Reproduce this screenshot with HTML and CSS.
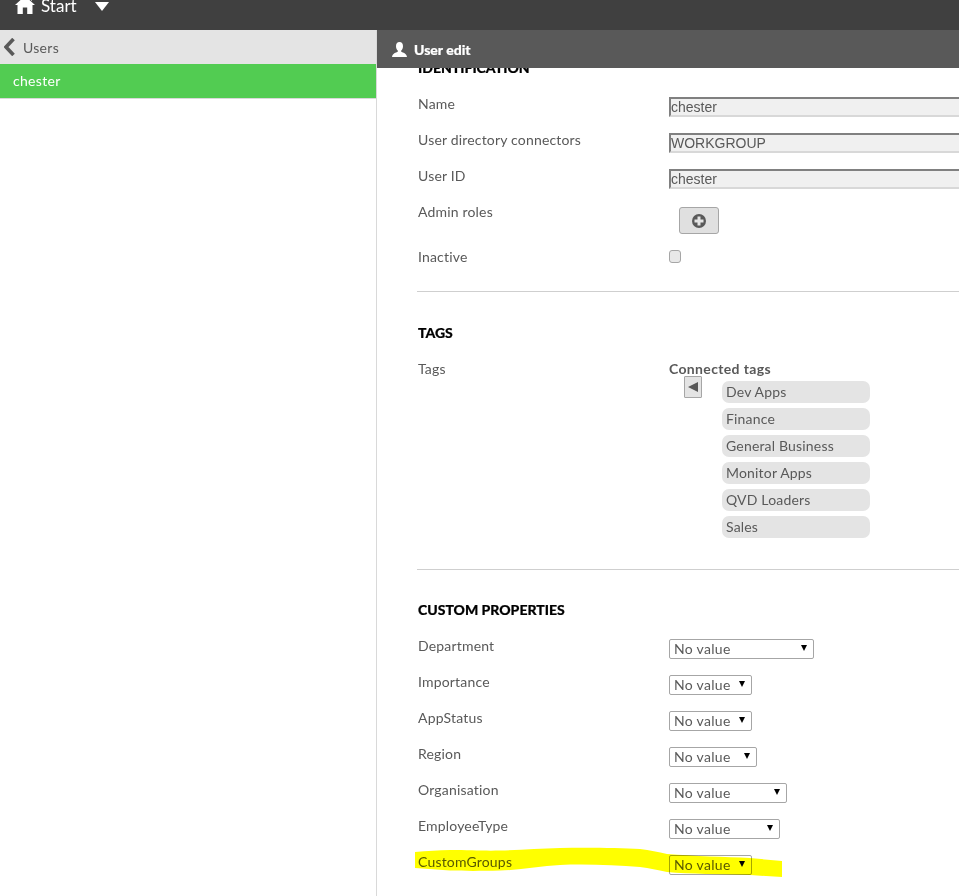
FILE: index.html
```html
<!DOCTYPE html>
<html lang="en">
<head>
<meta charset="utf-8">
<title>User edit</title>
<link rel="stylesheet" href="styles.css">
</head>
<body>
<header class="topbar">
  <svg class="home" width="20" height="18" viewBox="0 0 20 18"><path d="M10 0 L20 9 L17.5 9 L17.5 18 L12.2 18 L12.2 11.5 L7.8 11.5 L7.8 18 L2.5 18 L2.5 9 L0 9 Z M14.5 1 L17 1 L17 5 L14.5 3 Z" fill="#fff"/></svg>
  <span class="start">Start</span>
  <svg class="caret" width="14" height="9" viewBox="0 0 14 9"><path d="M0 0H14L7 9Z" fill="#fff"/></svg>
</header>
<div class="main">
  <aside class="side">
    <div class="side-head">
      <svg width="12" height="18" viewBox="0 0 12 18"><path d="M9.5 1 L2 9 L9.5 17" fill="none" stroke="#595959" stroke-width="3.6"/></svg>
      <span>Users</span>
    </div>
    <div class="side-item">chester</div>
  </aside>
  <section class="panel">
    <div class="panel-head">
      <svg width="15" height="15" viewBox="0 0 15 15"><path d="M7.5 0C10 0 11 2 11 4.2C11 6.2 10 7.8 9.2 8.6L9.2 9.8C11 10.6 14.6 11.4 15 15L0 15C.4 11.4 4 10.6 5.8 9.8L5.8 8.6C5 7.8 4 6.2 4 4.2C4 2 5 0 7.5 0Z" fill="#fff"/></svg>
      <span>User edit</span>
    </div>
    <div class="content">
      <h2 class="title first">IDENTIFICATION</h2>
      <div class="row"><label>Name</label><div class="field">chester</div></div>
      <div class="row"><label>User directory connectors</label><div class="field">WORKGROUP</div></div>
      <div class="row"><label>User ID</label><div class="field">chester</div></div>
      <div class="row roles"><label>Admin roles</label>
        <button class="add" type="button"><svg width="14" height="14" viewBox="0 0 14 14"><circle cx="7" cy="7" r="7" fill="#595959"/><path d="M5.5 2.5H8.5V5.5H11.5V8.5H8.5V11.5H5.5V8.5H2.5V5.5H5.5Z" fill="#e4e4e4"/></svg></button>
      </div>
      <div class="row inactive"><label>Inactive</label><span class="check"></span></div>
      <hr>
      <h2 class="title tags-title">TAGS</h2>
      <div class="tags">
        <label>Tags</label>
        <div class="tagbox">
          <div class="conn">Connected tags</div>
          <div class="tagbody">
            <button class="back" type="button"><svg width="10" height="10" viewBox="0 0 10 10"><path d="M0 5L10 0V10Z" fill="#595959"/></svg></button>
            <ul class="taglist">
              <li>Dev Apps</li><li>Finance</li><li>General Business</li><li>Monitor Apps</li><li>QVD Loaders</li><li>Sales</li>
            </ul>
          </div>
        </div>
      </div>
      <hr>
      <h2 class="title props-title">CUSTOM PROPERTIES</h2>
      <div class="row prop"><label>Department</label><div class="sel w145">No value<i></i></div></div>
      <div class="row prop"><label>Importance</label><div class="sel w83">No value<i></i></div></div>
      <div class="row prop"><label>AppStatus</label><div class="sel w83">No value<i></i></div></div>
      <div class="row prop"><label>Region</label><div class="sel w88">No value<i></i></div></div>
      <div class="row prop"><label>Organisation</label><div class="sel w118">No value<i></i></div></div>
      <div class="row prop"><label>EmployeeType</label><div class="sel w111">No value<i></i></div></div>
      <div class="row prop"><label>CustomGroups</label><div class="sel w83">No value<i></i></div></div>
    </div>
  </section>
</div>
<svg class="marker" width="368" height="34" viewBox="0 0 368 34"><path d="M0 6 C12 5 24 4 35 4 C55 4 70 5 85 4.5 C105 4 125 2.5 145 2 C175 1.5 205 2 225 3 C235 4 243 6 252 8 C280 10 310 11 335 12 L367 15 L367 31 L335 29 C305 28 275 28 252 26 C242 24 235 22 225 21 C200 19 170 18 145 19 C125 20 105 24 85 24.5 C65 25 50 25 35 24.5 L0 22 Z" fill="#ffff00"/></svg>
</body>
</html>
```
FILE: styles.css
```css
* { box-sizing: border-box; }
html, body { margin: 0; height: 100%; overflow: hidden; }
body { background: #fff; font-family: "Lato", sans-serif; font-size: 14px; color: #595959; }
.topbar { height: 30px; background: #404040; color: #fff; display: flex; align-items: flex-start; padding-left: 15px; overflow: hidden; }
.home { margin-top: -4px; }
.start { margin-left: 6px; font-size: 17px; line-height: 12px; }
.caret { margin-left: 18px; margin-top: 2px; }
.main { display: flex; height: 866px; }
.side { width: 377px; flex: none; border-right: 1px solid #d9d9d9; }
.side-head { height: 34px; background: #e4e4e4; display: flex; align-items: center; padding-left: 4px; gap: 7px; letter-spacing: .3px; }
.side-item { height: 35px; background: #52cc52; color: #fff; padding-left: 13px; line-height: 34px; border-bottom: 1px solid #d9d9d9; letter-spacing: .3px; }
.panel { flex: 1; min-width: 0; display: flex; flex-direction: column; }
.panel-head { height: 38px; flex: none; background: #595959; color: #fff; font-weight: 900; display: flex; align-items: center; gap: 7px; padding: 1px 0 0 15px; font-size: 14px; -webkit-text-stroke: .2px #fff; }
.content { flex: 1; overflow: hidden; padding-left: 40px; }
.title { margin: 0; padding-left: 1px; font-size: 14px; font-weight: 900; color: #000; line-height: 17px; -webkit-text-stroke: .2px #000; }
.first { margin-top: -9px; margin-bottom: 19px; }
.tags-title { margin-top: 32px; margin-bottom: 19px; }
.props-title { margin-top: 31px; margin-bottom: 19px; }
.row { display: flex; height: 36px; }
.row label { width: 252px; flex: none; padding-left: 1px; line-height: 17px; letter-spacing: .18px; }
.field { height: 20px; margin-top: 2px; flex: 1; background: #f0f0f0; border-style: solid; border-width: 2px 0 2px 2px; border-color: #808080 #d8d8d8 #d8d8d8 #808080; font-family: "Liberation Sans", sans-serif; font-size: 14px; line-height: 16px; }
.roles { height: 45px; }
.add { margin: 4px 0 0 10px; width: 40px; height: 27px; background: #e0e0e0; border: 1px solid #a6a6a6; border-radius: 3px; padding: 0; display: flex; align-items: center; justify-content: center; }
.inactive { height: 43px; }
.check { width: 12px; height: 13px; background: #e8e8e8; border: 1px solid #a6a6a6; border-radius: 3px; margin-top: 2px; }
hr { margin: 0; border: 0; border-top: 1px solid #cfcfcf; }
.tags { display: flex; height: 209px; }
.tags label { width: 252px; flex: none; padding-left: 1px; line-height: 17px; letter-spacing: .18px; }
.tagbox { flex: 1; }
.conn { font-weight: 700; line-height: 17px; font-size: 14px; letter-spacing: .35px; margin-bottom: -1px; }
.tagbody { display: flex; }
.back { margin: 0 0 0 15px; width: 18px; height: 22px; background: #e4e4e4; border: 1px solid #a6a6a6; border-radius: 1px; padding: 0; display: flex; align-items: center; justify-content: center; }
.taglist { list-style: none; margin: 5px 0 0 20px; padding: 0; width: 148px; }
.taglist li { height: 22px; background: #e4e4e4; border-radius: 7px; margin-bottom: 5px; padding-left: 4px; line-height: 22px; letter-spacing: .18px; }
.prop .sel { margin-top: 2px; }
.sel { height: 20px; border: 1px solid #a6a6a6; border-radius: 2px; display: flex; align-items: center; justify-content: space-between; padding: 0 6px 2px 4px; letter-spacing: .3px; }
.sel i { width: 0; height: 0; border-style: solid; border-width: 6px 3.5px 0; border-color: #000 transparent transparent; }
.w145 { width: 145px; } .w83 { width: 83px; } .w88 { width: 88px; } .w118 { width: 118px; } .w111 { width: 111px; }
.marker { position: absolute; left: 415px; top: 846px; mix-blend-mode: multiply; }
```
